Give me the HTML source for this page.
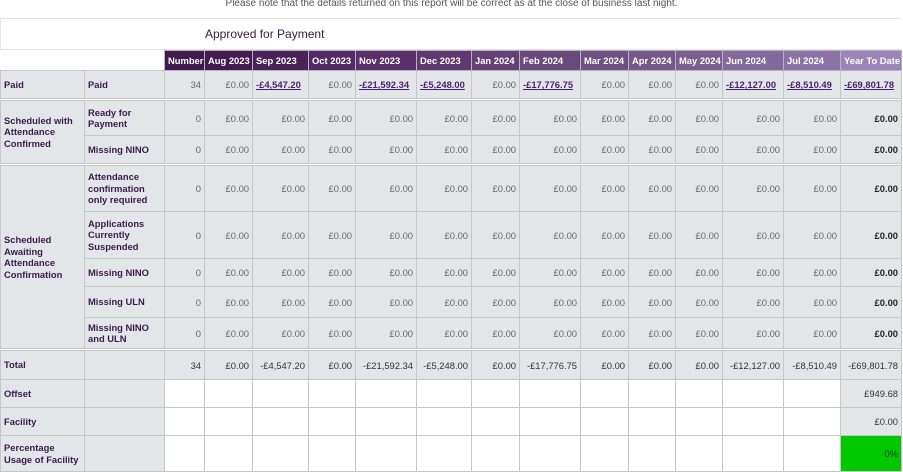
<!DOCTYPE html>
<html><head><meta charset="utf-8"><style>
body{margin:0;background:#fff;width:903px;height:472px;overflow:hidden;font-family:"Liberation Sans",sans-serif;}
.note{position:absolute;top:-2px;left:0;width:903px;text-align:center;font-size:10px;color:#555;}
.title{position:absolute;left:0;top:18px;width:900px;height:32px;border:1px solid #e4e4e4;border-right:none;box-sizing:border-box;}
.title span{position:absolute;left:204px;top:8px;font-size:12px;color:#3a1a4a;}
table{position:absolute;left:0;top:50px;border-collapse:collapse;table-layout:fixed;width:901px;font-size:9.4px;}
td,th{border:1px solid #c6c6c6;padding:0 3px;overflow:hidden;white-space:nowrap;}
th{color:#fff;font-weight:bold;text-align:left;height:19px;border-color:#b8b0c4;}
th.e{background:#fff;border:none;}
td{background:#e3e6e9;color:#666;text-align:right;}
td.l{text-align:left;color:#3a1a4a;font-weight:bold;white-space:normal;line-height:11.5px;}
td a{color:#4a1f6a;font-weight:bold;text-decoration:underline;}
td.w{background:#fff;}
td.b{color:#222;font-weight:bold;}
tr.sep td{border-top:3px double #c6c6c6;}
</style></head><body>
<div class="note">Please note that the details returned on this report will be correct as at the close of business last night.</div>
<div class="title"><span>Approved for Payment</span></div>
<table>
<colgroup><col style="width:84px"><col style="width:80px"><col style="width:40px"><col style="width:48px"><col style="width:56px"><col style="width:47px"><col style="width:61px"><col style="width:55px"><col style="width:48px"><col style="width:61px"><col style="width:48px"><col style="width:47px"><col style="width:47px"><col style="width:61px"><col style="width:57px"><col style="width:61px"></colgroup>
<tr><th class="e"></th><th class="e"></th>
<th style="background:#3f1a4d">Number</th><th style="background:#421c50">Aug 2023</th><th style="background:#4a2258">Sep 2023</th><th style="background:#532a63">Oct 2023</th><th style="background:#5a3068">Nov 2023</th><th style="background:#603870">Dec 2023</th><th style="background:#644075">Jan 2024</th><th style="background:#6a497c">Feb 2024</th><th style="background:#6e5083">Mar 2024</th><th style="background:#745889">Apr 2024</th><th style="background:#7a5e90">May 2024</th><th style="background:#836a9c">Jun 2024</th><th style="background:#8b73a6">Jul 2024</th><th style="background:#9a84b8">Year To Date</th></tr>
<tr style="height:29px"><td class="l">Paid</td><td class="l">Paid</td><td>34</td><td>£0.00</td><td style="text-align:left"><a>-£4,547.20</a></td><td>£0.00</td><td style="text-align:left"><a>-£21,592.34</a></td><td style="text-align:left"><a>-£5,248.00</a></td><td>£0.00</td><td style="text-align:left"><a>-£17,776.75</a></td><td>£0.00</td><td>£0.00</td><td>£0.00</td><td style="text-align:left"><a>-£12,127.00</a></td><td style="text-align:left"><a>-£8,510.49</a></td><td style="text-align:left"><a>-£69,801.78</a></td></tr>
<tr class="sep" style="height:36px"><td class="l" rowspan="2">Scheduled with Attendance Confirmed</td><td class="l">Ready for Payment</td><td>0</td><td>£0.00</td><td>£0.00</td><td>£0.00</td><td>£0.00</td><td>£0.00</td><td>£0.00</td><td>£0.00</td><td>£0.00</td><td>£0.00</td><td>£0.00</td><td>£0.00</td><td>£0.00</td><td class="b">£0.00</td></tr>
<tr style="height:29px"><td class="l">Missing NINO</td><td>0</td><td>£0.00</td><td>£0.00</td><td>£0.00</td><td>£0.00</td><td>£0.00</td><td>£0.00</td><td>£0.00</td><td>£0.00</td><td>£0.00</td><td>£0.00</td><td>£0.00</td><td>£0.00</td><td class="b">£0.00</td></tr>
<tr class="sep" style="height:47px"><td class="l" rowspan="5">Scheduled Awaiting Attendance Confirmation</td><td class="l">Attendance confirmation only required</td><td>0</td><td>£0.00</td><td>£0.00</td><td>£0.00</td><td>£0.00</td><td>£0.00</td><td>£0.00</td><td>£0.00</td><td>£0.00</td><td>£0.00</td><td>£0.00</td><td>£0.00</td><td>£0.00</td><td class="b">£0.00</td></tr>
<tr style="height:47px"><td class="l">Applications Currently Suspended</td><td>0</td><td>£0.00</td><td>£0.00</td><td>£0.00</td><td>£0.00</td><td>£0.00</td><td>£0.00</td><td>£0.00</td><td>£0.00</td><td>£0.00</td><td>£0.00</td><td>£0.00</td><td>£0.00</td><td class="b">£0.00</td></tr>
<tr style="height:28px"><td class="l">Missing NINO</td><td>0</td><td>£0.00</td><td>£0.00</td><td>£0.00</td><td>£0.00</td><td>£0.00</td><td>£0.00</td><td>£0.00</td><td>£0.00</td><td>£0.00</td><td>£0.00</td><td>£0.00</td><td>£0.00</td><td class="b">£0.00</td></tr>
<tr style="height:31px"><td class="l">Missing ULN</td><td>0</td><td>£0.00</td><td>£0.00</td><td>£0.00</td><td>£0.00</td><td>£0.00</td><td>£0.00</td><td>£0.00</td><td>£0.00</td><td>£0.00</td><td>£0.00</td><td>£0.00</td><td>£0.00</td><td class="b">£0.00</td></tr>
<tr style="height:32px"><td class="l">Missing NINO and ULN</td><td>0</td><td>£0.00</td><td>£0.00</td><td>£0.00</td><td>£0.00</td><td>£0.00</td><td>£0.00</td><td>£0.00</td><td>£0.00</td><td>£0.00</td><td>£0.00</td><td>£0.00</td><td>£0.00</td><td class="b">£0.00</td></tr>
<tr class="sep" style="height:30px"><td class="l">Total</td><td></td><td style="color:#333">34</td><td style="color:#333">£0.00</td><td style="color:#333">-£4,547.20</td><td style="color:#333">£0.00</td><td style="color:#333">-£21,592.34</td><td style="color:#333">-£5,248.00</td><td style="color:#333">£0.00</td><td style="color:#333">-£17,776.75</td><td style="color:#333">£0.00</td><td style="color:#333">£0.00</td><td style="color:#333">£0.00</td><td style="color:#333">-£12,127.00</td><td style="color:#333">-£8,510.49</td><td style="color:#333">-£69,801.78</td></tr>
<tr style="height:28px"><td class="l">Offset</td><td></td><td class="w"></td><td class="w"></td><td class="w"></td><td class="w"></td><td class="w"></td><td class="w"></td><td class="w"></td><td class="w"></td><td class="w"></td><td class="w"></td><td class="w"></td><td class="w"></td><td class="w"></td><td style="color:#333">£949.68</td></tr>
<tr style="height:28px"><td class="l">Facility</td><td></td><td class="w"></td><td class="w"></td><td class="w"></td><td class="w"></td><td class="w"></td><td class="w"></td><td class="w"></td><td class="w"></td><td class="w"></td><td class="w"></td><td class="w"></td><td class="w"></td><td class="w"></td><td style="color:#333">£0.00</td></tr>
<tr style="height:36px"><td class="l">Percentage Usage of Facility</td><td></td><td class="w"></td><td class="w"></td><td class="w"></td><td class="w"></td><td class="w"></td><td class="w"></td><td class="w"></td><td class="w"></td><td class="w"></td><td class="w"></td><td class="w"></td><td class="w"></td><td class="w"></td><td style="background:#00c800;color:#333">0%</td></tr>
</table>
</body></html>
